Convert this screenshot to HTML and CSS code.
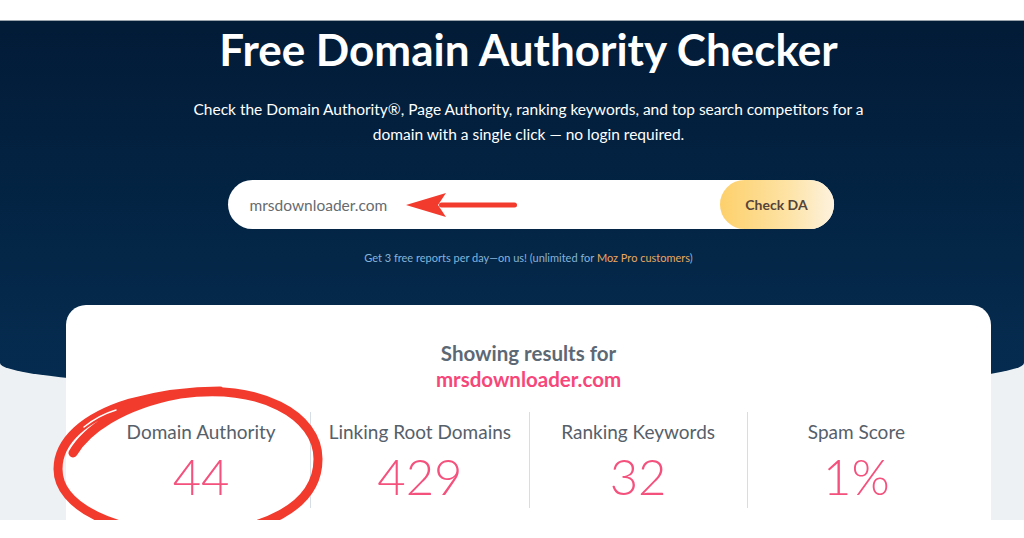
FILE: index.html
```html
<!DOCTYPE html>
<html lang="en">
<head>
  <meta charset="UTF-8">
  <title>Free Domain Authority Checker</title>
  <link rel="stylesheet" href="styles.css">
</head>
<body>
  <div class="top-strip"></div>

  <div class="stage">
    <section class="hero">
      <h1>Free Domain Authority Checker</h1>
      <p class="lead">Check the Domain Authority®, Page Authority, ranking keywords, and top search competitors for a domain with a single click — no login required.</p>

      <form class="check-form">
        <div class="field">
          <span class="field-value">mrsdownloader.com</span>
          <!-- annotation arrow -->
          <svg class="arrow" width="114" height="28" viewBox="0 0 114 28">
            <rect x="34" y="11.5" width="78" height="5" rx="2.5" fill="#f23a2d"/>
            <path d="M1 14 L41 2 L33 14 L41 26 Z" fill="#f23a2d"/>
          </svg>
        </div>
        <button type="submit" class="check-btn">Check DA</button>
      </form>

      <p class="note">Get 3 free reports per day—on us! (unlimited for <span class="moz">Moz Pro customers</span>)</p>
    </section>

    <section class="results">
      <div class="results-head">
        <div class="showing">Showing results for</div>
        <div class="domain">mrsdownloader.com</div>
      </div>

      <div class="stats">
        <div class="stat">
          <div class="stat-label">Domain Authority</div>
          <div class="stat-value">44</div>
        </div>
        <div class="stat">
          <div class="stat-label">Linking Root Domains</div>
          <div class="stat-value">429</div>
        </div>
        <div class="stat">
          <div class="stat-label">Ranking Keywords</div>
          <div class="stat-value">32</div>
        </div>
        <div class="stat">
          <div class="stat-label">Spam Score</div>
          <div class="stat-value">1%</div>
        </div>
      </div>

      <!-- hand drawn circle round the DA score -->
      <svg class="circle-mark" width="276" height="160" viewBox="0 0 276 160">
        <path d="M23 70 C 36 48, 70 22, 130 11 C 210 0, 268 32, 268 76 C 268 124, 212 151, 138 151 C 66 151, 8 124, 8 86 C 8 58, 34 34, 80 20 C 110 12, 140 8, 170 8"
              fill="none" stroke="#f23a2d" stroke-width="9" stroke-linecap="round"/>
        <path d="M34 44 C 44 36, 56 30, 66 27" fill="none" stroke="#fff" stroke-width="1.5" stroke-linecap="round"/>
      </svg>
    </section>
  </div>
</body>
</html>
```

FILE: styles.css
```css
body {
  margin: 0;
  background: #fff;
  font-family: Lato, "Open Sans", Arial, sans-serif;
}
.top-strip {
  height: 20px;
  background: #fff;
  border-bottom: 1px solid #9aa3ab;
}
.stage {
  background: #edf1f4;
  height: 499px;
}
.hero {
  background: linear-gradient(#021b37, #052d51);
  border-radius: 0 0 50% 50% / 0 0 30px 30px;
  padding: 2px 0 128px 33px;
  text-align: center;
  color: #fff;
}
h1 {
  margin: 0;
  font-size: 44px;
  line-height: 52px;
  font-weight: 700;
}
.lead {
  margin: 22px auto 0;
  max-width: 700px;
  font-size: 15.5px;
  line-height: 25px;
}
.check-form {
  position: relative;
  display: flex;
  width: 606px;
  height: 49px;
  margin: 33px auto 0;
  background: #fff;
  border-radius: 25px;
  left: 2px;
}
.field {
  position: relative;
  flex: 1;
  display: flex;
  align-items: center;
  padding-left: 22px;
  color: #666b70;
  font-size: 15.5px;
}
.arrow {
  position: absolute;
  left: 177px;
  top: 11px;
}
.check-btn {
  width: 114px;
  border: none;
  border-radius: 25px;
  background: linear-gradient(90deg, #fdd06b, #fde3a6 60%, #fdf2de);
  color: #55443a;
  font-family: inherit;
  font-size: 14px;
  font-weight: 700;
  cursor: pointer;
}
.note {
  margin: 22px 0 0;
  font-size: 11px;
  line-height: 14px;
  color: #86b4d9;
}
.moz {
  color: #eaa861;
}
.results {
  position: relative;
  height: 180px;
  margin: -88px 33px 0 66px;
  padding: 35px 26px 0;
  background: #fff;
  border-radius: 20px 20px 0 0;
}
.results-head {
  text-align: center;
  font-size: 20.5px;
  line-height: 26px;
  font-weight: 700;
}
.showing {
  color: #5c6975;
}
.domain {
  color: #f7477a;
}
.stats {
  display: grid;
  grid-template-columns: repeat(4, 1fr);
  margin-top: 20px;
}
.stat {
  padding: 8px 0 3px;
  text-align: center;
}
.stat + .stat {
  border-left: 1px solid #d6dde4;
}
.stat-label {
  font-size: 19px;
  line-height: 24px;
  color: #56606a;
}
.stat-value {
  margin-top: 3px;
  font-size: 49px;
  line-height: 58px;
  font-weight: 300;
  color: #f4517d;
}
.circle-mark {
  position: absolute;
  left: -16px;
  top: 78px;
}
```
